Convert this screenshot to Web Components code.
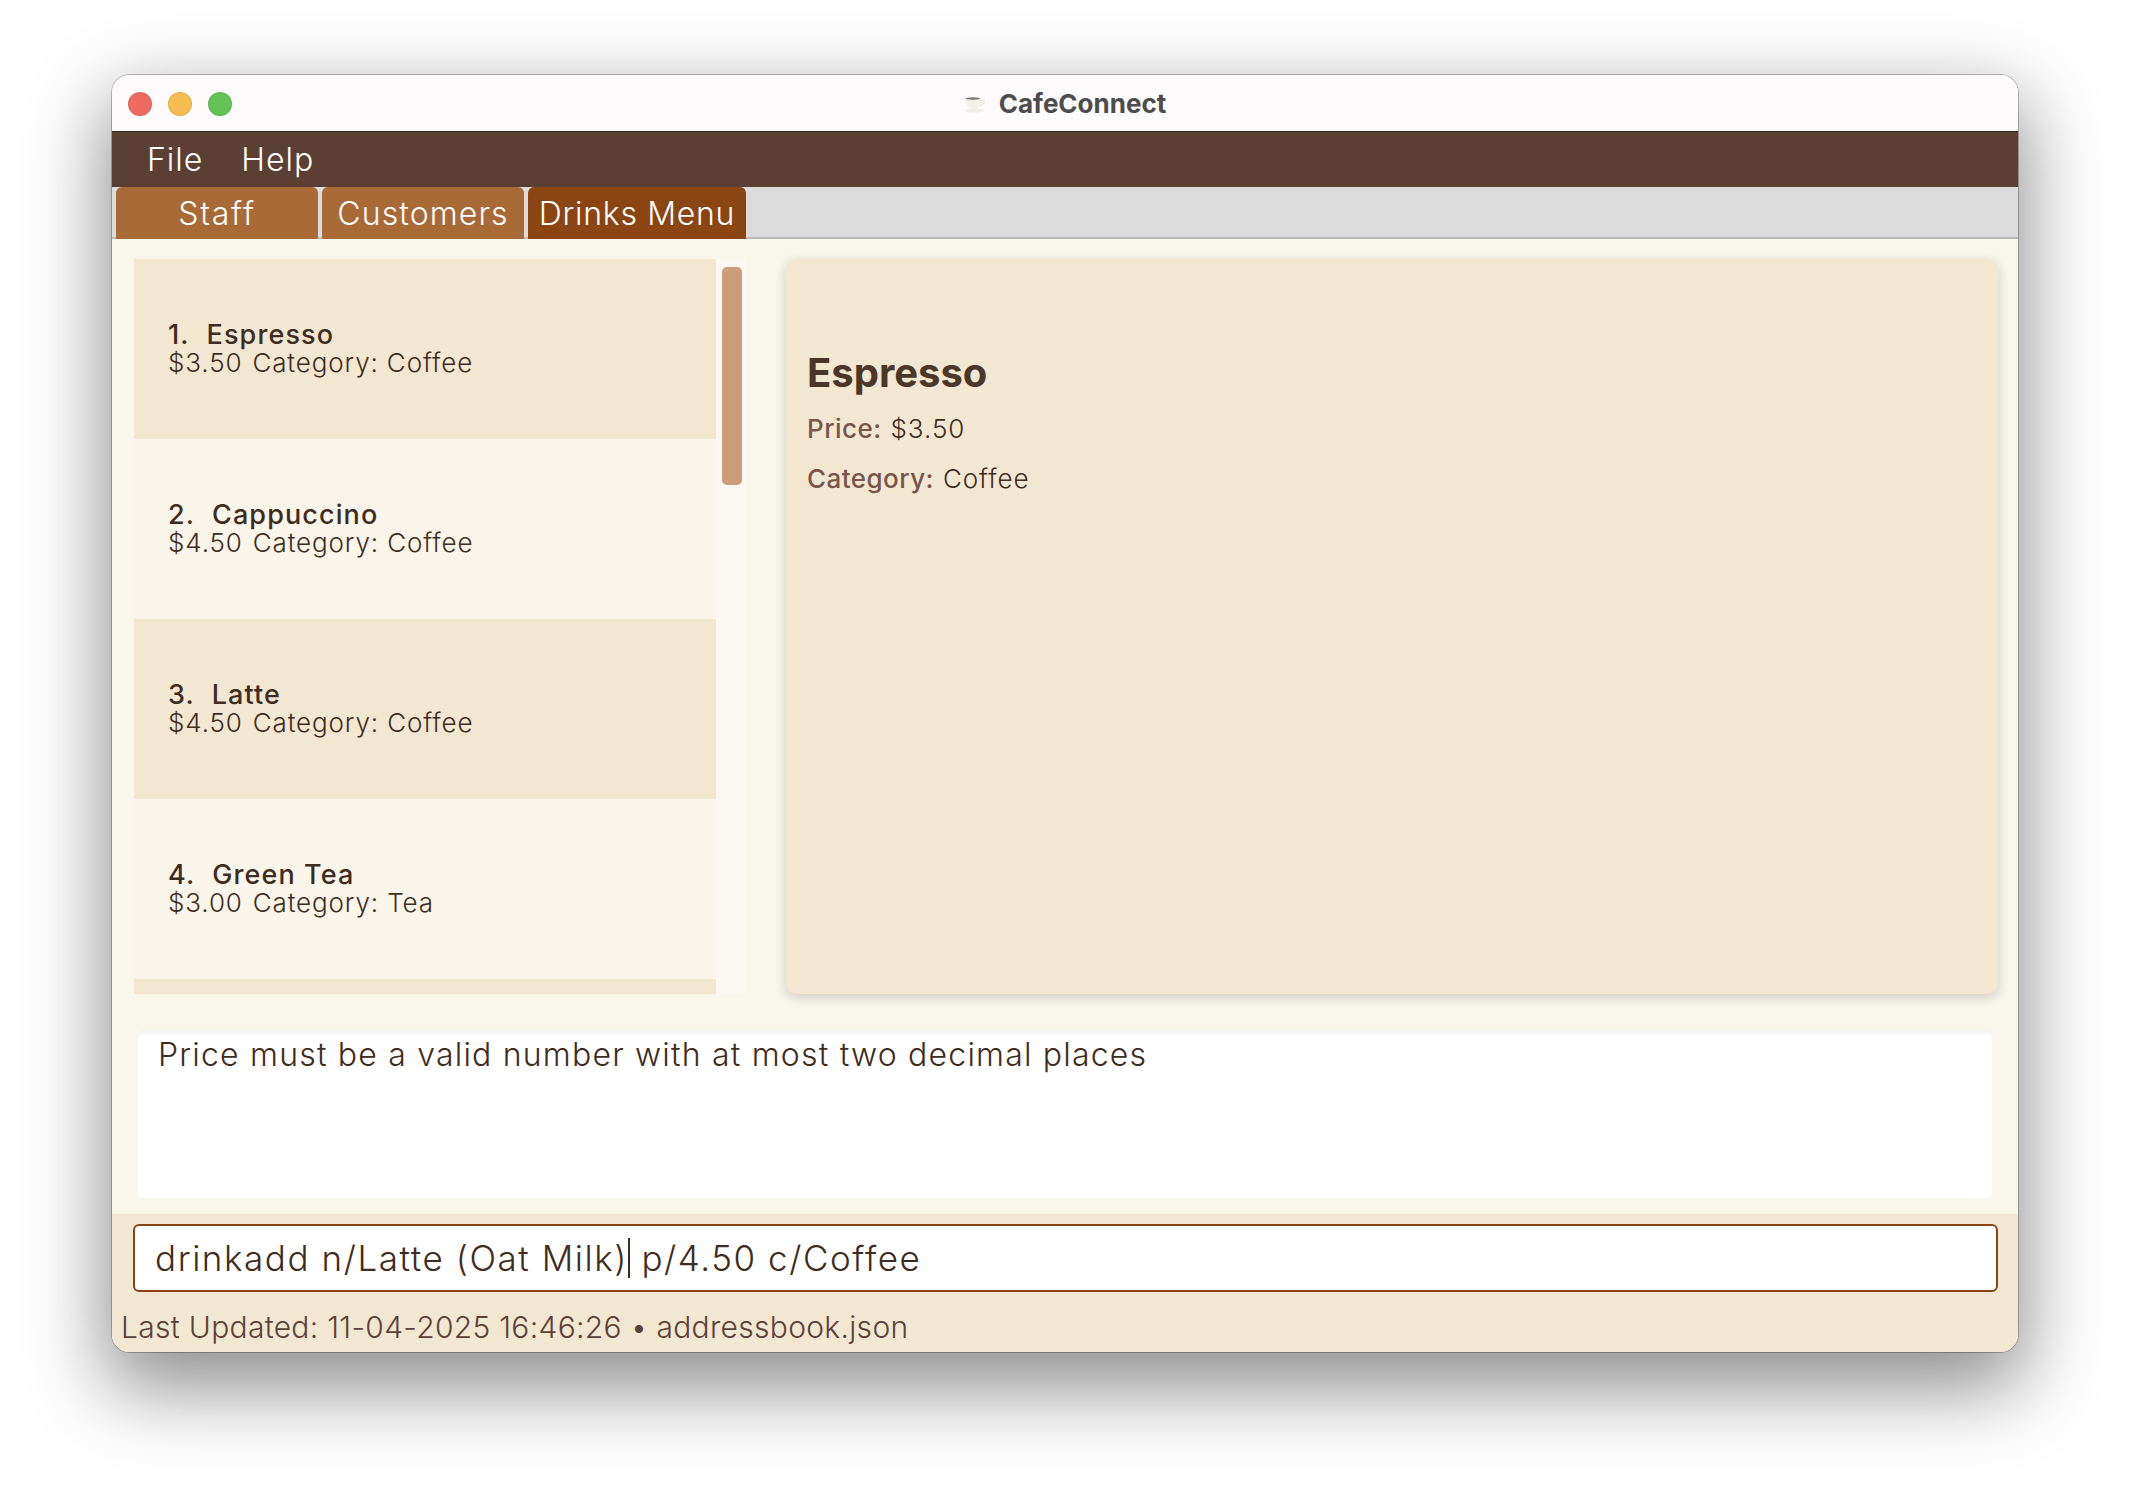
<!DOCTYPE html>
<html>
<head>
<meta charset="utf-8">
<title>CafeConnect</title>
<style>
  html, body { margin: 0; padding: 0; background: #fff; }
  body { width: 2130px; height: 1500px; overflow: hidden; font-family: Inter, "Liberation Sans", sans-serif; }
</style>
</head>
<body>
<app-window>
  <title-bar slot="title">CafeConnect</title-bar>
  <menu-bar slot="menu"></menu-bar>
  <tab-bar slot="tabs"></tab-bar>
  <drink-list slot="list"></drink-list>
  <drink-detail slot="detail"></drink-detail>
  <result-box slot="result">Price must be a valid number with at most two decimal places</result-box>
  <command-box slot="command"></command-box>
  <status-bar slot="status">Last Updated: 11-04-2025 16:46:26 • addressbook.json</status-bar>
</app-window>

<script>
class AppWindow extends HTMLElement {
  constructor() {
    super();
    this.attachShadow({mode: 'open'}).innerHTML = `<style>
      :host { display: block; width: 1906px; height: 1277px; margin: 75px 0 0 112px; }
      .frame {
        height: 100%; display: flex; flex-direction: column; border-radius: 18px; overflow: hidden;
        background: #f9f6ec;
      }
      .shadow {
        height: 100%; border-radius: 18px;
        box-shadow: 0 0 0 1px rgba(0,0,0,.25), 0 30px 80px 6px rgba(0,0,0,.45);
      }
      .body { flex: 1; display: flex; flex-direction: column; padding: 20px 20px 16px 22px; }
      .top { display: flex; height: 735px; gap: 40px; }
      .bottom { margin: 36px 6px 0 4px; }
      .foot { background: #f2e8d2; height: 138px; box-sizing: border-box; padding: 10px 20px 0 21px; }
    </style>
    <div class="shadow"><div class="frame">
      <slot name="title"></slot>
      <slot name="menu"></slot>
      <slot name="tabs"></slot>
      <div class="body">
        <div class="top"><slot name="list"></slot><slot name="detail"></slot></div>
        <div class="bottom"><slot name="result"></slot></div>
      </div>
      <div class="foot"><slot name="command"></slot><slot name="status"></slot></div>
    </div></div>`;
  }
}

class TitleBar extends HTMLElement {
  constructor() {
    super();
    this.attachShadow({mode: 'open'}).innerHTML = `<style>
      :host { display: flex; position: relative; height: 57px; background: #fdfbfc; align-items: center; justify-content: center; border-bottom: 1px solid #3c2415; box-sizing: border-box; }
      .lights { position: absolute; left: 16px; top: 17px; display: flex; gap: 16px; }
      .lights i { width: 24px; height: 24px; border-radius: 50%; display: block; box-sizing: border-box; border: 1px solid rgba(0,0,0,.08); }
      .name { display: flex; align-items: center; gap: 13px; font: 700 26px Inter, "Liberation Sans", sans-serif; color: #4c4c4c; }
      svg { display: block; margin-top: 4px; }
    </style>
    <div class="lights"><i style="background:#ee6a5f"></i><i style="background:#f5bd4f"></i><i style="background:#61c454"></i></div>
    <div class="name">
      <svg width="22" height="16" viewBox="0 0 22 16">
        <ellipse cx="10.500" cy="13.600" rx="10.500" ry="2" fill="#f1f0e6"/>
        <path d="M16 3.600c3.400-.8 5 .6 3.800 2.600-1 1.600-3 2.400-5 3" fill="none" stroke="#e9e6dc" stroke-width="1.500"/>
        <path d="M1.500 1.500c0 5 1.500 9 4.500 10.500h6c3-1.500 4.500-5.500 4.500-10.500z" fill="#f3f1e9"/>
        <ellipse cx="9" cy="1.500" rx="7.500" ry="1.200" fill="#77736d"/>
      </svg>
      <span><slot></slot></span>
    </div>`;
  }
}

class MenuBar extends HTMLElement {
  constructor() {
    super();
    this.attachShadow({mode: 'open'}).innerHTML = `<style>
      :host { display: flex; height: 55px; background: #5c3f33; color: #fff; box-sizing: border-box; padding-left: 35px; gap: 38px; align-items: center; letter-spacing: 1px; font: 300 32px Inter, "Liberation Sans", sans-serif; }
    </style>
    <span>File</span><span>Help</span>`;
  }
}

class TabBar extends HTMLElement {
  constructor() {
    super();
    this.attachShadow({mode: 'open'}).innerHTML = `<style>
      :host { display: flex; height: 52px; background: #dcdcdc; box-sizing: border-box; border-bottom: 2px solid #b8b8b8; padding-left: 4px; gap: 4px; font: 300 32px Inter, "Liberation Sans", sans-serif; color: #fff; }
      .tab { height: 52px; display: flex; align-items: center; justify-content: center; background: #a86b38; border-radius: 6px 6px 0 0; box-sizing: border-box; }
      .tab.on { background: #8b4513; }
    </style>
    <div class="tab" style="width:202px;letter-spacing:1.8px">Staff</div>
    <div class="tab" style="width:202px;letter-spacing:1.1px">Customers</div>
    <div class="tab on" style="width:218px;letter-spacing:.7px">Drinks Menu</div>`;
  }
}

class DrinkCard extends HTMLElement {
  connectedCallback() {
    if (this.shadowRoot) return;
    this.attachShadow({mode: 'open'}).innerHTML = `<style>
      :host { display: flex; flex-direction: column; height: 180px; box-sizing: border-box; padding: 60px 0 0 34px; flex: none; color: #3e2c20; font-family: Inter, "Liberation Sans", sans-serif; background: #f9f5ea; }
      :host([odd]) { background: #f2e8d2; }
      .t { font-size: 27px; font-weight: 500; line-height: 32px; display: flex; gap: 17px; letter-spacing: 1.1px; }
      .s { font-size: 26px; font-weight: 300; line-height: 28px; margin-top: -2px; display: flex; gap: 10px; letter-spacing: .87px; }
    </style>
    <div class="t"><span>${this.getAttribute('index')}.</span><span>${this.getAttribute('name')}</span></div>
    <div class="s"><span>${this.getAttribute('price')}</span><span>Category: ${this.getAttribute('category')}</span></div>`;
  }
}

class DrinkList extends HTMLElement {
  constructor() {
    super();
    const drinks = [
      ['Espresso', '$3.50', 'Coffee'],
      ['Cappuccino', '$4.50', 'Coffee'],
      ['Latte', '$4.50', 'Coffee'],
      ['Green Tea', '$3.00', 'Tea'],
    ];
    const cards = drinks.map((d, i) =>
      `<drink-card index="${i + 1}" name="${d[0]}" price="${d[1]}" category="${d[2]}" ${i % 2 ? '' : 'odd'}></drink-card>`).join('');
    this.attachShadow({mode: 'open'}).innerHTML = `<style>
      :host { display: flex; width: 612px; height: 735px; flex: none; }
      .rows { width: 582px; display: flex; flex-direction: column; overflow: hidden; }
      .five { height: 15px; flex: none; background: #f2e8d2; }
      .track { width: 30px; background: #fbf8f1; box-sizing: border-box; padding: 8px 4px 0 6px; }
      .thumb { height: 218px; border-radius: 5px; background: #cb9e79; }
    </style>
    <div class="rows">${cards}<div class="five"></div></div>
    <div class="track"><div class="thumb"></div></div>`;
  }
}

class DrinkDetail extends HTMLElement {
  constructor() {
    super();
    this.attachShadow({mode: 'open'}).innerHTML = `<style>
      :host { display: block; width: 1212px; height: 735px; flex: none; box-sizing: border-box; background: #f2e8d2; border-radius: 10px; box-shadow: 0 3px 12px rgba(0,0,0,.18); padding: 89px 21px 0; color: #3e2c20; font-family: Inter, "Liberation Sans", sans-serif; }
      h2 { margin: 0 0 16px; font-size: 40px; line-height: 50px; font-weight: 700; color: #4a3728; }
      p { margin: 0 0 21px; font-size: 26px; line-height: 29px; font-weight: 300; display: flex; gap: 9px; letter-spacing: .95px; }
      b { font-weight: 500; color: #795548; letter-spacing: .45px; }
    </style>
    <h2>Espresso</h2>
    <p><b>Price:</b><span>$3.50</span></p>
    <p><b>Category:</b><span>Coffee</span></p>`;
  }
}

class ResultBox extends HTMLElement {
  constructor() {
    super();
    this.attachShadow({mode: 'open'}).innerHTML = `<style>
      :host { display: block; height: 168px; box-sizing: border-box; background: #fff; border-radius: 5px; padding: 6px 20px; box-shadow: inset 0 5px 4px -2px rgba(60,40,80,.07); color: #3e2c20; letter-spacing: 1.2px; font: 300 32px/38px Inter, "Liberation Sans", sans-serif; }
    </style><slot></slot>`;
  }
}

class CommandBox extends HTMLElement {
  constructor() {
    super();
    this.attachShadow({mode: 'open'}).innerHTML = `<style>
      :host { display: flex; align-items: center; height: 68px; box-sizing: border-box; background: #fff; border: 2px solid #8b4513; border-radius: 6px; padding-left: 20px; color: #3e2c20; letter-spacing: 1.56px; font: 300 35px Inter, "Liberation Sans", sans-serif; white-space: pre; }
      i { display: inline-block; width: 2px; height: 40px; background: #3e2c20; vertical-align: middle; }
    </style>
    <span>drinkadd n/Latte (Oat Milk)</span><i></i><span> p/4.50 c/Coffee</span>`;
  }
}

class StatusBar extends HTMLElement {
  constructor() {
    super();
    this.attachShadow({mode: 'open'}).innerHTML = `<style>
      :host { display: block; margin: 17px 0 0 -12px; color: #5d4037; letter-spacing: .3px; font: 300 30px/36px Inter, "Liberation Sans", sans-serif; }
    </style><slot></slot>`;
  }
}

customElements.define('app-window', AppWindow);
customElements.define('title-bar', TitleBar);
customElements.define('menu-bar', MenuBar);
customElements.define('tab-bar', TabBar);
customElements.define('drink-card', DrinkCard);
customElements.define('drink-list', DrinkList);
customElements.define('drink-detail', DrinkDetail);
customElements.define('result-box', ResultBox);
customElements.define('command-box', CommandBox);
customElements.define('status-bar', StatusBar);
</script>
</body>
</html>
